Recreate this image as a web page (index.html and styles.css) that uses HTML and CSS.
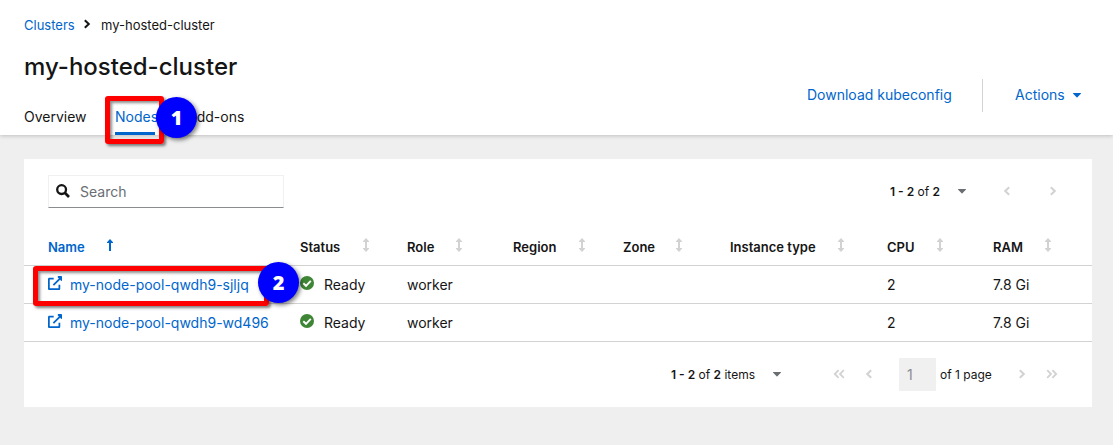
FILE: index.html
```html
<!DOCTYPE html>
<html lang="en">
<head>
<meta charset="utf-8">
<title>my-hosted-cluster</title>
<link rel="stylesheet" href="styles.css">
</head>
<body>
<svg class="defs" aria-hidden="true">
  <symbol id="angle" viewBox="0 0 8 10"><path d="M1.8 1.2 5.8 5 1.8 8.8" fill="none" stroke="currentColor" stroke-width="2"/></symbol>
  <symbol id="angles" viewBox="0 0 12 10"><path d="M1.2 1.2 5 5 1.2 8.8M6.4 1.2 10.2 5 6.4 8.8" fill="none" stroke="currentColor" stroke-width="1.8"/></symbol>
  <symbol id="caret" viewBox="0 0 8 5"><path d="M.4 0h7.2c.4 0 .5.5.2.8L4.4 4.3a.6.6 0 0 1-.8 0L.2.8C-.1.5 0 0 .4 0z" fill="currentColor"/></symbol>
  <symbol id="sort" viewBox="0 0 6 14"><path d="M3 0 6 3.3V4H4v6h2v.7L3 14 0 10.7V10h2V4H0v-.7z" fill="currentColor"/></symbol>
  <symbol id="external" viewBox="0 0 512 512"><path fill="currentColor" d="M448 320v144c0 26-22 48-48 48H48c-26 0-48-22-48-48V112c0-26 22-48 48-48h160v64H64v320h320V320zM512 24v136c0 18-22 26-34 14l-36-36-222 222-46-46 222-222-36-36C348 44 356 0 376 0h112c13 0 24 11 24 24z"/></symbol>
  <symbol id="check" viewBox="0 0 14 14"><circle cx="7" cy="7" r="7" fill="currentColor"/><path d="M3.3 7.2 6 9.8l4.8-4.9" fill="none" stroke="#fff" stroke-width="1.9"/></symbol>
</svg>
<header class="page-header">
  <div class="heading">
    <nav class="breadcrumb"><a class="crumb-link">Clusters</a><svg class="crumb-sep"><use href="#angle"/></svg><span class="crumb-current">my-hosted-cluster</span></nav>
    <h1 class="title">my-hosted-cluster</h1>
    <nav class="tabs"><a class="tab overview">Overview</a><a class="tab active">Nodes</a><a class="tab addons">Add-ons</a></nav>
  </div>
  <div class="actions">
    <a class="download">Download kubeconfig</a>
    <span class="divider"></span>
    <a class="menu">Actions</a><svg class="menu-caret"><use href="#caret"/></svg>
  </div>
</header>
<main class="card">
  <div class="toolbar">
    <div class="search"><svg class="search-icon" viewBox="0 0 14 14"><circle cx="5.6" cy="5.6" r="4.4" fill="none" stroke="currentColor" stroke-width="2.3"/><path d="m8.8 8.8 4.2 4.2" stroke="currentColor" stroke-width="2.7"/></svg><span class="placeholder">Search</span></div>
    <div class="pager-top"><span class="count"><b>1 - 2</b> of <b>2</b></span><svg class="caret"><use href="#caret"/></svg><svg class="angle prev top-prev"><use href="#angle"/></svg><svg class="angle top-next"><use href="#angle"/></svg></div>
  </div>
  <div class="table">
    <div class="row head">
      <span class="th sorted"><span class="label name">Name</span><svg class="sort-up" viewBox="0 0 6 12"><path d="M3 0 6 3.2V4H4v8H2V4H0v-.8z" fill="currentColor"/></svg></span>
      <span class="th"><span class="label status-label">Status</span><svg class="sort"><use href="#sort"/></svg></span>
      <span class="th"><span class="label role">Role</span><svg class="sort"><use href="#sort"/></svg></span>
      <span class="th"><span class="label region">Region</span><svg class="sort"><use href="#sort"/></svg></span>
      <span class="th"><span class="label zone">Zone</span><svg class="sort"><use href="#sort"/></svg></span>
      <span class="th"><span class="label instance">Instance type</span><svg class="sort"><use href="#sort"/></svg></span>
      <span class="th"><span class="label cpu">CPU</span><svg class="sort"><use href="#sort"/></svg></span>
      <span class="th"><span class="label ram">RAM</span><svg class="sort"><use href="#sort"/></svg></span>
    </div>
    <div class="row">
      <a class="node"><svg class="external"><use href="#external"/></svg><span class="pool first">my-node-pool-qwdh9-sjljq</span></a>
      <span class="state"><svg class="check"><use href="#check"/></svg><span class="ready">Ready</span></span>
      <span class="worker">worker</span><span></span><span></span><span></span><span>2</span><span class="memory">7.8 Gi</span>
    </div>
    <div class="row">
      <a class="node"><svg class="external"><use href="#external"/></svg><span class="pool">my-node-pool-qwdh9-wd496</span></a>
      <span class="state"><svg class="check"><use href="#check"/></svg><span class="ready">Ready</span></span>
      <span class="worker">worker</span><span></span><span></span><span></span><span>2</span><span class="memory">7.8 Gi</span>
    </div>
  </div>
  <div class="pager-bottom"><span class="count items"><b>1 - 2</b> of <b>2</b> items</span><svg class="caret"><use href="#caret"/></svg><svg class="angles prev first-page"><use href="#angles"/></svg><svg class="angle prev prev-page"><use href="#angle"/></svg><span class="page-input">1</span><span class="of-page">of 1 page</span><svg class="angle next-page"><use href="#angle"/></svg><svg class="angles last-page"><use href="#angles"/></svg></div>
</main>
<div class="mark mark-tab"></div><div class="badge badge-tab">1</div>
<div class="mark mark-row"></div><div class="badge badge-row">2</div>
</body>
</html>
```
FILE: styles.css
```css
* { box-sizing: border-box; }
body { margin: 0; height: 445px; overflow: hidden; background: #efefef; color: #151515; font: 14px/20px Inter, "Noto Sans", sans-serif; white-space: nowrap; }
.defs { position: absolute; width: 0; height: 0; }
svg { display: block; flex: none; color: #d2d2d2; }
a { color: #06c; }
.page-header { height: 135px; background: #fff; display: flex; justify-content: space-between; padding-left: 24px; box-shadow: 0 1px 4px rgba(0,0,0,.2); }
.heading { padding-top: 15px; }
.breadcrumb { display: flex; align-items: center; height: 20px; font-size: 13px; }
.crumb-link { width: 48px; }
.crumb-sep { width: 8px; height: 10px; margin: 0 14px 2px 11px; color: #151515; transform: translateX(0); margin-right: 10px; }
.title { margin: 16px 0 0; font-size: 24px; line-height: 32px; font-weight: 500; }
.tabs { display: flex; margin-top: 20px; height: 32px; }
.tab { padding-top: 4px; color: #151515; }
.overview { width: 91px; }
.tab.active { width: 40px; color: #06c; border-bottom: 3px solid #06c; }
.addons { margin-left: 32px; }
.actions { display: flex; align-items: center; height: 34px; margin-top: 78px; padding-right: 32px; }
.download { width: 135px; }
.divider { width: 1px; height: 33px; margin: 0 32px 0 40px; background: #d2d2d2; }
.menu { width: 47px; }
.menu-caret { width: 8px; height: 5px; margin-left: 11px; color: #06c; }
.card { width: 1068px; height: 248px; margin: 24px 0 0 24px; background: #fff; }
.toolbar { display: flex; justify-content: space-between; height: 69px; padding: 16px 24px 0; }
.search { width: 236px; height: 33px; border: 1px solid #f0f0f0; border-bottom-color: #8a8d90; display: flex; align-items: center; padding-left: 7px; }
.search-icon { width: 14px; height: 14px; color: #151515; margin-bottom: 2px; }
.placeholder { margin-left: 10px; color: #6a6e73; }
.pager-top, .pager-bottom { display: flex; align-items: center; height: 33px; font-size: 12px; }
.count { width: 50px; }
.count b { font-weight: 600; }
.caret { width: 8px; height: 5px; color: #6a6e73; margin-left: 18px; }
.angle { width: 8px; height: 10px; margin-bottom: 2px; }
.angles { width: 12px; height: 10px; margin-bottom: 2px; }
.prev { transform: scaleX(-1); }
.top-prev { margin-left: 37px; }
.top-next { margin-left: 38px; margin-right: 11px; }
.row { display: grid; grid-template-columns: 252px 107px 106px 110px 107px 157px 106px 1fr; align-items: center; height: 38px; padding-left: 24px; border-bottom: 1px solid #d2d2d2; }
.th { display: flex; align-items: center; font-weight: 600; font-size: 13px; }
.sorted { color: #06c; }
.sort { width: 6px; height: 14px; margin: 0 0 3px 20px; }
.sort-up { width: 6px; height: 12px; margin: 0 0 3px 21px; color: #06c; }
.name { width: 38px; }
.status-label { width: 43px; }
.role { width: 29px; }
.region { width: 46px; }
.zone { width: 33px; }
.instance { width: 88px; }
.cpu { width: 30px; }
.ram { width: 32px; }
.node, .state { display: flex; align-items: center; }
.external { width: 14px; height: 14px; margin: 0 8px 3px 0; color: #06c; }
.check { width: 14px; height: 14px; margin: 0 10px 3px 0; color: #3e8635; }
.pager-bottom { margin-top: 16px; padding-left: 647px; }
.items { width: 84px; }
.first-page { margin-left: 52px; }
.prev-page { margin-left: 20px; }
.page-input { width: 37px; height: 33px; margin-left: 26px; padding: 7px 8px; background: #f0f0f0; color: #8a8d90; font-size: 14px; }
.of-page { width: 51px; margin-left: 4px; }
.next-page { margin-left: 27px; }
.last-page { margin-left: 20px; }
.mark { position: absolute; border: 5px solid #f00; border-radius: 3px; box-shadow: 2px 2px 3px rgba(0,0,0,.5), inset 2px 2px 3px rgba(0,0,0,.45); }
.mark-tab { left: 105px; top: 96px; width: 59px; height: 48px; }
.mark-row { left: 33px; top: 266px; width: 236px; height: 40px; }
.badge { position: absolute; width: 41px; height: 41px; border-radius: 50%; background: #00f; color: #fff; font: 800 20px/41px "Open Sans", sans-serif; text-align: center; box-shadow: 2px 2px 4px rgba(0,0,0,.5); }
.badge-tab { left: 156px; top: 97px; }
.badge-row { left: 258px; top: 262px; }
```
